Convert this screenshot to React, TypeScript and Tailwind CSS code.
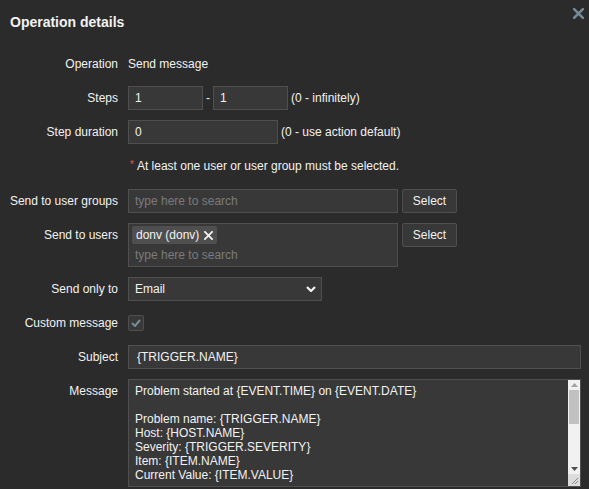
const messageLines = [
  'Problem started at {EVENT.TIME} on {EVENT.DATE}',
  '',
  'Problem name: {TRIGGER.NAME}',
  'Host: {HOST.NAME}',
  'Severity: {TRIGGER.SEVERITY}',
  'Item: {ITEM.NAME}',
  'Current Value: {ITEM.VALUE}',
]

function Row({ label, children }: { label: string; children?: React.ReactNode }) {
  return (
    <div className="flex items-start">
      <div className="w-[118px] shrink-0 text-right leading-6">{label}</div>
      <div className="ml-[10px] flex items-start">{children}</div>
    </div>
  )
}

function Field({ value, className }: { value: string; className: string }) {
  return (
    <div className={`h-6 border border-[#4f4f4f] bg-[#383838] px-[6px] leading-[22px] ${className}`}>{value}</div>
  )
}

function SelectButton() {
  return (
    <div className="ml-[4px] h-6 w-[55px] rounded-[2px] border border-[#4f4f4f] bg-[#383838] text-center leading-[22px]">
      Select
    </div>
  )
}

function Cross({ size, color, width }: { size: number; color: string; width: number }) {
  return (
    <svg width={size} height={size} viewBox="0 0 10 10">
      <path d="M1 1 L9 9 M9 1 L1 9" stroke={color} strokeWidth={width} strokeLinecap="square" />
    </svg>
  )
}

export default function App() {
  return (
    <div className="relative h-[489px] w-full overflow-hidden bg-[#2b2b2b] font-['Liberation_Sans',Arial,sans-serif] text-[12px] text-[#f2f2f2]">
      <div className="px-[10px] pt-[14px] text-[14px] font-bold leading-4">Operation details</div>
      <div className="absolute right-[5px] top-[8px]">
        <Cross size={11} color="#768d99" width={2.2} />
      </div>

      <div className="mt-[22px] flex flex-col gap-[10px]">
        <Row label="Operation">
          <span className="leading-6">Send message</span>
        </Row>

        <Row label="Steps">
          <Field value="1" className="w-[75px]" />
          <span className="w-[10px] text-center leading-6">-</span>
          <Field value="1" className="w-[75px]" />
          <span className="ml-[3px] leading-6">(0 - infinitely)</span>
        </Row>

        <Row label="Step duration">
          <Field value="0" className="w-[150px]" />
          <span className="ml-[3px] leading-6">(0 - use action default)</span>
        </Row>

        <Row label="">
          <span className="leading-6">
            <span className="relative top-[-2px] mr-[3px] ml-[2px] text-[10px] text-[#e45959]">*</span>
            At least one user or user group must be selected.
          </span>
        </Row>

        <Row label="Send to user groups">
          <Field value="type here to search" className="w-[270px] text-[#7b7b7b]" />
          <SelectButton />
        </Row>

        <Row label="Send to users">
          <div className="h-[44px] w-[270px] border border-[#4f4f4f] bg-[#383838] px-[3px] pt-[2px]">
            <div className="inline-flex h-[18px] items-center rounded-[2px] bg-[#4f4f4f] pl-[4px] pr-[4px] leading-[18px]">
              donv (donv)
              <span className="ml-[5px] flex">
                <Cross size={9} color="#f2f2f2" width={2} />
              </span>
            </div>
            <div className="mt-[1px] pl-[3px] leading-5 text-[#7b7b7b]">type here to search</div>
          </div>
          <SelectButton />
        </Row>

        <Row label="Send only to">
          <div className="flex h-6 w-[194px] items-center justify-between border border-[#4f4f4f] bg-[#383838] pl-[6px] pr-[4px]">
            <span>Email</span>
            <svg width="10" height="6" viewBox="0 0 10 6" className="mr-[1px]">
              <path d="M1 1 L5 5 L9 1" stroke="#f2f2f2" strokeWidth="2.2" fill="none" />
            </svg>
          </div>
        </Row>

        <Row label="Custom message">
          <div className="mt-[4px] flex h-4 w-4 items-center justify-center rounded-[2px] border border-[#4f4f4f] bg-[#383838]">
            <svg width="10" height="8" viewBox="0 0 10 8">
              <path d="M1 4 L4 7 L9 1" stroke="#768d99" strokeWidth="2" fill="none" />
            </svg>
          </div>
        </Row>

        <Row label="Subject">
          <Field value="{TRIGGER.NAME}" className="w-[453px] pl-[8px]" />
        </Row>

        <Row label="Message">
          <div className="flex h-[108px] w-[453px] border border-[#4f4f4f] bg-[#383838]">
            <div className="flex-1 px-[6px] pt-[4px] leading-[14px]">
              {messageLines.map((line, i) => (
                <div key={i} className="h-[14px]">{line}</div>
              ))}
            </div>
            <div className="flex w-[12px] flex-col bg-[#f1f1f1]">
              <div className="flex h-[10px] items-center justify-center">
                <svg width="7" height="4" viewBox="0 0 7 4"><path d="M0 4 L3.5 0 L7 4 Z" fill="#a3a3a3" /></svg>
              </div>
              <div className="mx-[1px] h-[34px] bg-[#c1c1c1]" />
              <div className="flex-1" />
              <div className="flex h-[10px] items-center justify-center">
                <svg width="7" height="4" viewBox="0 0 7 4"><path d="M0 0 L7 0 L3.5 4 Z" fill="#505050" /></svg>
              </div>
              <div className="flex h-[12px] items-end justify-end bg-[#dcdcdc] p-[1px]">
                <svg width="8" height="8" viewBox="0 0 8 8">
                  <path d="M7 1 L1 7 M7 4 L4 7" stroke="#8a8a8a" strokeWidth="1" />
                </svg>
              </div>
            </div>
          </div>
        </Row>
      </div>
    </div>
  )
}
